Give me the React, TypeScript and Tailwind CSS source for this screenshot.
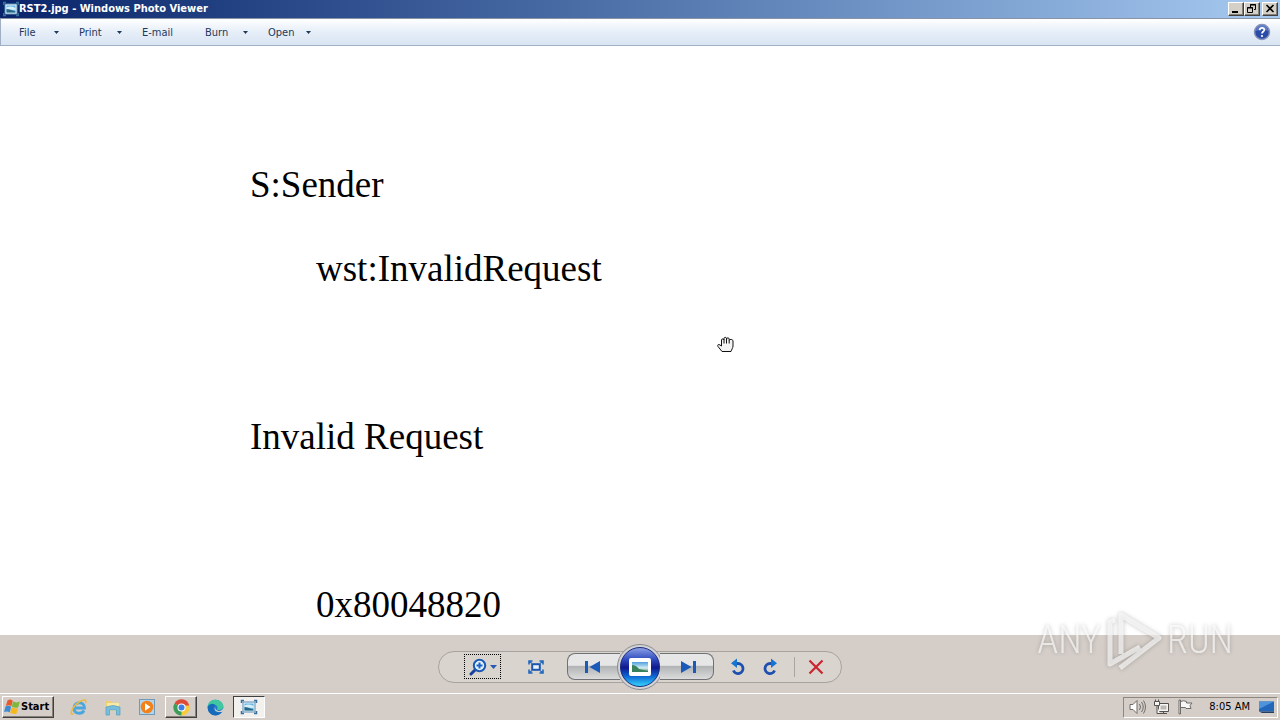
import React from "react";

type MenuItem = { label: string; arrow: boolean; className: string };

const menuItems: MenuItem[] = [
  { label: "File", arrow: true, className: "w-[40px]" },
  { label: "Print", arrow: true, className: "w-[43px]" },
  { label: "E-mail", arrow: false, className: "w-[43px]" },
  { label: "Burn", arrow: true, className: "w-[43px]" },
  { label: "Open", arrow: true, className: "w-[43px]" },
];

const lines = [
  { text: "S:Sender", indent: false },
  { text: "wst:InvalidRequest", indent: true },
  { text: "", indent: false },
  { text: "Invalid Request", indent: false },
  { text: "", indent: false },
  { text: "0x80048820", indent: true },
];

const raised =
  "border border-t-white border-l-white border-r-[#404040] border-b-[#404040] shadow-[inset_-1px_-1px_0_#868078]";

const PictureIcon = ({ className }: { className: string }) => (
  <svg viewBox="0 0 16 16" className={className} aria-hidden="true">
    <rect x="2" y="3" width="12" height="10" fill="#e9f5fb" stroke="#5b8eb5" />
    <rect x="3.5" y="4.5" width="9" height="7" fill="#62b5e2" />
    <path d="M3.500 6.500q4-2 9 .5v2l-9-.5z" fill="#d9eff7" />
    <path d="M3.500 11.500V8l3 .5 6 2v1z" fill="#286783" />
    <path d="M.5 4V1.500H3M13 1.500h2.500V4M.5 12v2.500H3M13 14.500h2.500V12" fill="none" stroke="#376e9c" strokeWidth="1.500" />
  </svg>
);

const DownArrow = () => (
  <svg viewBox="0 0 5 3" className="h-[3px] w-[5px]" aria-hidden="true">
    <path d="M0 0h5L2.500 3z" fill="#1e395b" />
  </svg>
);

const TitleBar: React.FC = () => (
  <header className="flex h-[18px] shrink-0 items-center bg-linear-to-r from-[#0a246a] to-[#a6caf0] pr-[2px] pl-[3px]">
    <PictureIcon className="h-4 w-4" />
    <h1 className="flex-1 font-['DejaVu_Sans_Condensed','DejaVu_Sans',sans-serif] text-[11px] leading-[18px] font-bold text-white">
      RST2.jpg - Windows Photo Viewer
    </h1>
    <button aria-label="Minimize" className={`h-[14px] w-4 bg-[#d4d0c8] ${raised}`}>
      <svg viewBox="0 0 14 12" className="h-3 w-[14px]">
        <path d="M3 8h6v2H3z" />
      </svg>
    </button>
    <button aria-label="Restore" className={`h-[14px] w-4 bg-[#d4d0c8] ${raised}`}>
      <svg viewBox="0 0 14 12" className="h-3 w-[14px]" fill="none" stroke="#000">
        <path d="M5.500 4V1.500h5v5H9M5 2h6M2.500 4.500h5v5h-5zM2 5h6" />
      </svg>
    </button>
    <button aria-label="Close" className={`ml-[2px] h-[14px] w-4 bg-[#d4d0c8] ${raised}`}>
      <svg viewBox="0 0 14 12" className="h-3 w-[14px]" stroke="#000" strokeWidth="1.600">
        <path d="M3.500 2l7 7M10.500 2l-7 7" />
      </svg>
    </button>
  </header>
);

const MenuBar: React.FC = () => (
  <nav className="flex h-7 shrink-0 items-center border-t border-b border-t-[#8a94a6] border-b-[#a0afc3] border-l border-l-[#a0afc3] bg-linear-to-b from-white via-[#e6eef8] to-[#d9e5f3] pr-[9px] pl-[18px]">
    <div className="flex flex-1 items-center gap-5 pt-px">
      {menuItems.map((item) => (
        <button
          key={item.label}
          className={`flex items-center justify-between font-['DejaVu_Sans_Condensed','DejaVu_Sans',sans-serif] text-[11px] leading-4 text-[#1e395b] ${item.className}`}
        >
          {item.label}
          {item.arrow && <DownArrow />}
        </button>
      ))}
    </div>
    <button aria-label="Help">
      <svg viewBox="0 0 18 18" className="h-[18px] w-[18px]">
        <circle cx="9" cy="9" r="7.500" fill="#2b4ba8" stroke="#8793b8" strokeWidth="1.500" />
        <path d="M3 8a6 6 0 0 1 12 0q-6-3-12 0" fill="#7f9be0" opacity=".6" />
        <path d="M6.700 7.200C6.700 4 11.500 4.200 11.300 7c-.1 1.500-2.300 1.700-2.300 3.600" fill="none" stroke="#fff" strokeWidth="1.800" />
        <circle cx="9" cy="13" r="1.100" fill="#fff" />
      </svg>
    </button>
  </nav>
);

const HandCursor = () => (
  <svg viewBox="0 0 17 17" className="absolute top-[290px] left-[717px] h-[17px] w-[17px]" aria-hidden="true">
    <path
      d="M5 15.500L1 10.500C0 9 1.500 7.800 3 9l1.500 1V4c0-1.500 2.500-1.500 2.500 0V2.500C7 1 9.500 1 9.500 2.500V3c0-1.500 2.700-1.500 2.700 0v1.500c0-1.500 3.800-1.500 3.800.5v5c0 2-1.500 3.500-2 5.500z"
      fill="#f4f4f4"
      stroke="#111"
    />
    <path d="M7 4v3.500M9.500 3v4.500M12.200 4.500v3" stroke="#111" />
  </svg>
);

const Watermark = () => (
  <div
    className="absolute right-[47px] bottom-12 flex items-center gap-1 font-['Roboto_Condensed','Roboto',sans-serif] text-[38px] leading-[64px] font-light text-white/65 [filter:drop-shadow(0_0_2px_rgb(0_0_0/0.35))]"
    aria-label="ANY RUN"
  >
    <span>ANY</span>
    <svg viewBox="0 0 58 64" className="h-16 w-[58px]" fill="none" stroke="currentColor" strokeWidth="5" strokeLinejoin="round">
      <path d="M10 12l-5 2v42l30-17M16 46V7l38 23-39 30" />
    </svg>
    <span>RUN</span>
  </div>
);

const Rotate = ({ flip = false }: { flip?: boolean }) => (
  <svg viewBox="0 0 16 18" className={flip ? "h-[18px] w-4 -scale-x-100" : "h-[18px] w-4"} aria-hidden="true">
    <path d="M5 5.500h3a5 5 0 1 1-4.600 7" fill="none" stroke="#1d50ae" strokeWidth="2.800" />
    <path d="M1 5.300L7 .5v9.600z" fill="#1675d3" />
  </svg>
);

const Controls: React.FC = () => (
  <div className="flex h-[58px] shrink-0 items-center justify-center bg-[#d5cec8] pt-[8px] pb-[3px]">
    <div className="flex h-8 items-center rounded-full border border-[#a7a29d] bg-[#d9d4ce] pr-[9px] pl-[25px]">
      <button className="flex h-[25px] w-[37px] items-center justify-center gap-[3px] border border-dotted border-black" aria-label="Change the display size">
        <svg viewBox="0 0 18 18" className="h-[18px] w-[18px]">
          <path d="M6.500 11.500L2 16" stroke="#183f99" strokeWidth="3" strokeLinecap="round" />
          <circle cx="10.500" cy="7.500" r="5.700" fill="#e5f2fc" stroke="#1c59b5" strokeWidth="2" />
          <path d="M10.500 4.500v6M7.500 7.500h6" stroke="#1b63c6" strokeWidth="2" />
        </svg>
        <svg viewBox="0 0 7 4" className="h-1 w-[7px]">
          <path d="M0 0h7L3.500 4z" fill="#2459b5" />
        </svg>
      </button>
      <button className="flex h-[25px] w-[66px] items-center justify-center pl-1" aria-label="Actual size">
        <svg viewBox="0 0 16 14" className="h-[14px] w-4">
          <rect x="4.200" y="4.200" width="7.600" height="5.600" fill="#e5f2fc" stroke="#1d55ae" strokeWidth="2" />
          <path d="M1 4.500V1h3.500M11.500 1H15v3.500M15 9.500V13h-3.500M4.500 13H1V9.500M1 1l2.500 2M15 1l-2.500 2M15 13l-2.500-2M1 13l2.500-2" fill="none" stroke="#2367bf" strokeWidth="1.600" />
        </svg>
      </button>
      <div className="flex items-center">
        <button className="flex h-[27px] w-[53px] items-center justify-center rounded-l-lg border border-r-0 border-[#6f7175] bg-linear-to-b from-[#e6e6e6] from-45% via-[#b2b4b6] via-50% to-[#dcdcdc] pr-1" aria-label="Previous">
          <svg viewBox="0 0 15 12" className="h-3 w-[15px]" fill="#1a5ab8">
            <path d="M0 0h3v12H0zM15 0v12L4.500 6z" />
          </svg>
        </button>
        <button className="-mx-1 -my-2 rounded-full" aria-label="Play slide show">
          <svg viewBox="0 0 48 48" className="h-12 w-12">
            <defs>
              <linearGradient id="orb" x1="0" y1="0" x2="0" y2="1">
                <stop offset="0" stopColor="#8fa4e6" />
                <stop offset=".3" stopColor="#304cc0" />
                <stop offset=".52" stopColor="#10188c" />
                <stop offset=".72" stopColor="#0d60d0" />
                <stop offset="1" stopColor="#35d8ff" />
              </linearGradient>
              <linearGradient id="sky" x1="0" y1="0" x2="0" y2="1">
                <stop offset="0" stopColor="#4d9ede" />
                <stop offset=".6" stopColor="#d5edf2" />
                <stop offset="1" stopColor="#4d8a67" />
              </linearGradient>
            </defs>
            <circle cx="24" cy="24" r="22.500" fill="#d3d3d6" stroke="#898b91" />
            <circle cx="24" cy="24" r="19.500" fill="url(#orb)" stroke="#1b2d7d" />
            <rect x="13" y="15" width="22" height="18" rx="2" fill="#fff" />
            <rect x="16" y="19" width="16" height="10" fill="url(#sky)" />
            <path d="M16 22q4 0 7 4l9 2v1H16z" fill="#39805c" />
          </svg>
        </button>
        <button className="flex h-[27px] w-[54px] items-center justify-center rounded-r-lg border border-l-0 border-[#6f7175] bg-linear-to-b from-[#e6e6e6] from-45% via-[#b2b4b6] via-50% to-[#dcdcdc] pl-1" aria-label="Next">
          <svg viewBox="0 0 15 12" className="h-3 w-[15px]" fill="#1a5ab8">
            <path d="M12 0h3v12h-3zM0 0v12l10.500-6z" />
          </svg>
        </button>
      </div>
      <button className="ml-2 flex w-8 justify-center" aria-label="Rotate counterclockwise">
        <Rotate />
      </button>
      <button className="flex w-8 justify-center" aria-label="Rotate clockwise">
        <Rotate flip />
      </button>
      <div className="mr-[5px] ml-2 h-5 w-px bg-[#aaa5a0]" />
      <button className="flex w-8 justify-center" aria-label="Delete">
        <svg viewBox="0 0 16 16" className="h-4 w-4" fill="none" stroke="#cb2430" strokeWidth="2.200">
          <path d="M1.500 1.500l13 13M14.500 1.500l-13 13" />
        </svg>
      </button>
    </div>
  </div>
);

const Taskbar: React.FC = () => (
  <footer className="flex h-[27px] shrink-0 items-center border-t border-white bg-[#d5cec8] pr-[2px] pl-[2px]">
    <button className={`flex h-[22px] w-[52px] items-center gap-px pl-px font-['DejaVu_Sans_Condensed','DejaVu_Sans',sans-serif] text-[11px] leading-4 font-bold text-black ${raised}`}>
      <svg viewBox="0 0 16 16" className="h-4 w-4 shrink-0" aria-hidden="true">
        <path d="M3.500 1.500q3-2 5.200.3L7.400 7.200Q5 5.300 1.800 7z" fill="#e65a2c" />
        <path d="M9.100 2.300q3 2 6.700.3L14.300 8.200q-3.200 1.400-6.500-.6z" fill="#7eb63e" />
        <path d="M1.500 7.600q3-1.700 5.600.2L5.700 13.500q-2.500-1.900-5.600-.4z" fill="#3a8bd5" />
        <path d="M7.600 8.300q3 1.900 6.500.6l-1.600 5.500q-3.200 1.300-6.300-.6z" fill="#f5b91f" />
      </svg>
      Start
    </button>
    <div className="ml-[9px] flex flex-1 items-center gap-[2px]">
      <button className="flex h-[22px] w-8 items-center justify-center" aria-label="Internet Explorer">
        <svg viewBox="0 0 18 18" className="h-[18px] w-[18px]" fill="none">
          <path d="M5 10h9.500c.3-7-10.500-7-10.500 0 0 6.500 8 6.500 10 2.500" stroke="#4aa6df" strokeWidth="2.800" />
          <path d="M3.500 15.500C-2 19 3 7 10 3.500c4-2.300 7-2.300 5.500 1.500" stroke="#e9b93d" strokeWidth="1.500" />
        </svg>
      </button>
      <button className="flex h-[22px] w-8 items-center justify-center" aria-label="Windows Explorer">
        <svg viewBox="0 0 18 18" className="h-[18px] w-[18px]">
          <path d="M2 3h5l1 1.500h7V13H2z" fill="#edcf70" />
          <path d="M3 5h12v8H3z" fill="#f8e9a6" />
          <path d="M2 9q7-3 14 0v8h-3.500v-5h-7v5H2z" fill="#79bddd" stroke="#559dbe" strokeWidth=".7" />
        </svg>
      </button>
      <button className="flex h-[22px] w-8 items-center justify-center" aria-label="Windows Media Player">
        <svg viewBox="0 0 18 18" className="h-[18px] w-[18px]">
          <rect x="1.500" y="1.500" width="15" height="15" fill="#b3d4e9" stroke="#7199b8" />
          <circle cx="9" cy="9" r="6.300" fill="#f28119" />
          <path d="M7 5.300l5.500 3.700L7 12.700z" fill="#fff" />
        </svg>
      </button>
      <button className={`flex h-[22px] w-8 items-center justify-center ${raised}`} aria-label="Google Chrome">
        <svg viewBox="0 0 18 18" className="h-[17px] w-[17px]">
          <path d="M9 9L1.600 4.700A8.500 8.500 0 0 1 16.400 4.700z" fill="#df4938" />
          <path d="M9 9l7.400-4.300A8.500 8.500 0 0 1 9 17.500z" fill="#f8cb3c" />
          <path d="M9 9v8.500A8.500 8.500 0 0 1 1.600 4.700z" fill="#3c9d59" />
          <path d="M9 4.700h7.400L17 7H9z" fill="#df4938" />
          <circle cx="9" cy="9" r="4.300" fill="#fff" />
          <circle cx="9" cy="9" r="3.200" fill="#3e7ee8" />
        </svg>
      </button>
      <button className="flex h-[22px] w-8 items-center justify-center" aria-label="Microsoft Edge">
        <svg viewBox="0 0 18 18" className="h-[17px] w-[17px]">
          <circle cx="9" cy="9" r="8.300" fill="#2078c8" />
          <path d="M.9 8C1-2 17-1 17.300 8c0 4-5 4.500-6.800 3 2-3-1.500-6-5-5Q2.500 6.600.9 9z" fill="#42c8a0" />
          <path d="M.8 8C3 4 8 4.500 8.700 7c-4 2-1.700 7.500 3.300 7.500 2 0 3-.5 4.300-1.300C11 21 0 17 .8 8z" fill="#1769ba" />
          <path d="M9 7.300c-1.500 2.800 1.500 6 5.500 5.200l3-2.500v3c-4 2-9.500.5-9.500-3z" fill="#d5cec8" />
        </svg>
      </button>
      <button className="flex h-[22px] w-8 items-center justify-center border border-t-[#404040] border-r-white border-b-white border-l-[#404040] bg-[#f3f1ee]" aria-label="RST2.jpg - Windows Photo Viewer">
        <PictureIcon className="h-4 w-[18px]" />
      </button>
    </div>
    <div className="flex h-[21px] items-center border border-t-[#8d8780] border-r-white border-b-white border-l-[#8d8780] pr-[2px] pl-[5px]">
      <div className="flex items-center gap-[7px]">
        <svg viewBox="0 0 17 16" className="h-4 w-[17px]" fill="#fff" stroke="#6f6b68" aria-hidden="true">
          <path d="M1 5.500h3l4-4v13l-4-4H1z" />
          <path d="M10.500 5q2 3 0 6M12.500 3q3.500 5 0 10M14.500 1.500q4 6.500 0 13" fill="none" />
        </svg>
        <svg viewBox="0 0 17 16" className="h-4 w-[17px]" fill="#f5f5f5" stroke="#55514e" aria-hidden="true">
          <path d="M5.500 4.500h10v8h-10zM7 14.500h7M10.500 13v1.500" />
          <path d="M7.500 6.500h6v4h-6z" fill="#bdb8b4" stroke="none" />
          <path d="M1.500 2.500h5v4h-5zM2.500 2V.5M5.500 2V.5M4 6.500v8h3" />
        </svg>
        <svg viewBox="0 0 17 16" className="h-4 w-[17px]" fill="#f7f7f7" stroke="#6f6b68" aria-hidden="true">
          <path d="M2 1h1.500v14H2zM3.500 2.500q3-1.500 6 0v1.500h5.500l-2 2.500 1 3H9l-.5-1H3.500z" />
        </svg>
      </div>
      <time className="mr-2 ml-[15px] font-['DejaVu_Sans_Condensed','DejaVu_Sans',sans-serif] text-[11px] leading-4 whitespace-nowrap text-black">
        8:05 AM
      </time>
      <svg viewBox="0 0 17 14" className="h-[14px] w-[17px]" aria-hidden="true">
        <path d="M1 1.500h15v10H1z" fill="#2466b9" />
        <path d="M1 1.500h15L1 9z" fill="#4f93db" />
        <path d="M1 11.500h15V13H4z" fill="#243e61" />
      </svg>
    </div>
  </footer>
);

const App: React.FC = () => {
  return (
    <div className="relative flex h-screen flex-col overflow-hidden bg-[#d5cec8]">
      <TitleBar />
      <MenuBar />

      {/* Opened picture */}
      <main className="relative min-h-0 flex-1 overflow-hidden bg-white pt-[97px] pl-[250px] font-['Liberation_Serif',serif] text-[37px] leading-[84px] text-black">
        {lines.map((line, index) => (
          <p key={index} className={line.indent ? "h-[84px] pl-[66px]" : "h-[84px]"}>
            {line.text}
          </p>
        ))}
        <HandCursor />
      </main>

      <Controls />
      <Taskbar />
      <Watermark />
    </div>
  );
};

export default App;
